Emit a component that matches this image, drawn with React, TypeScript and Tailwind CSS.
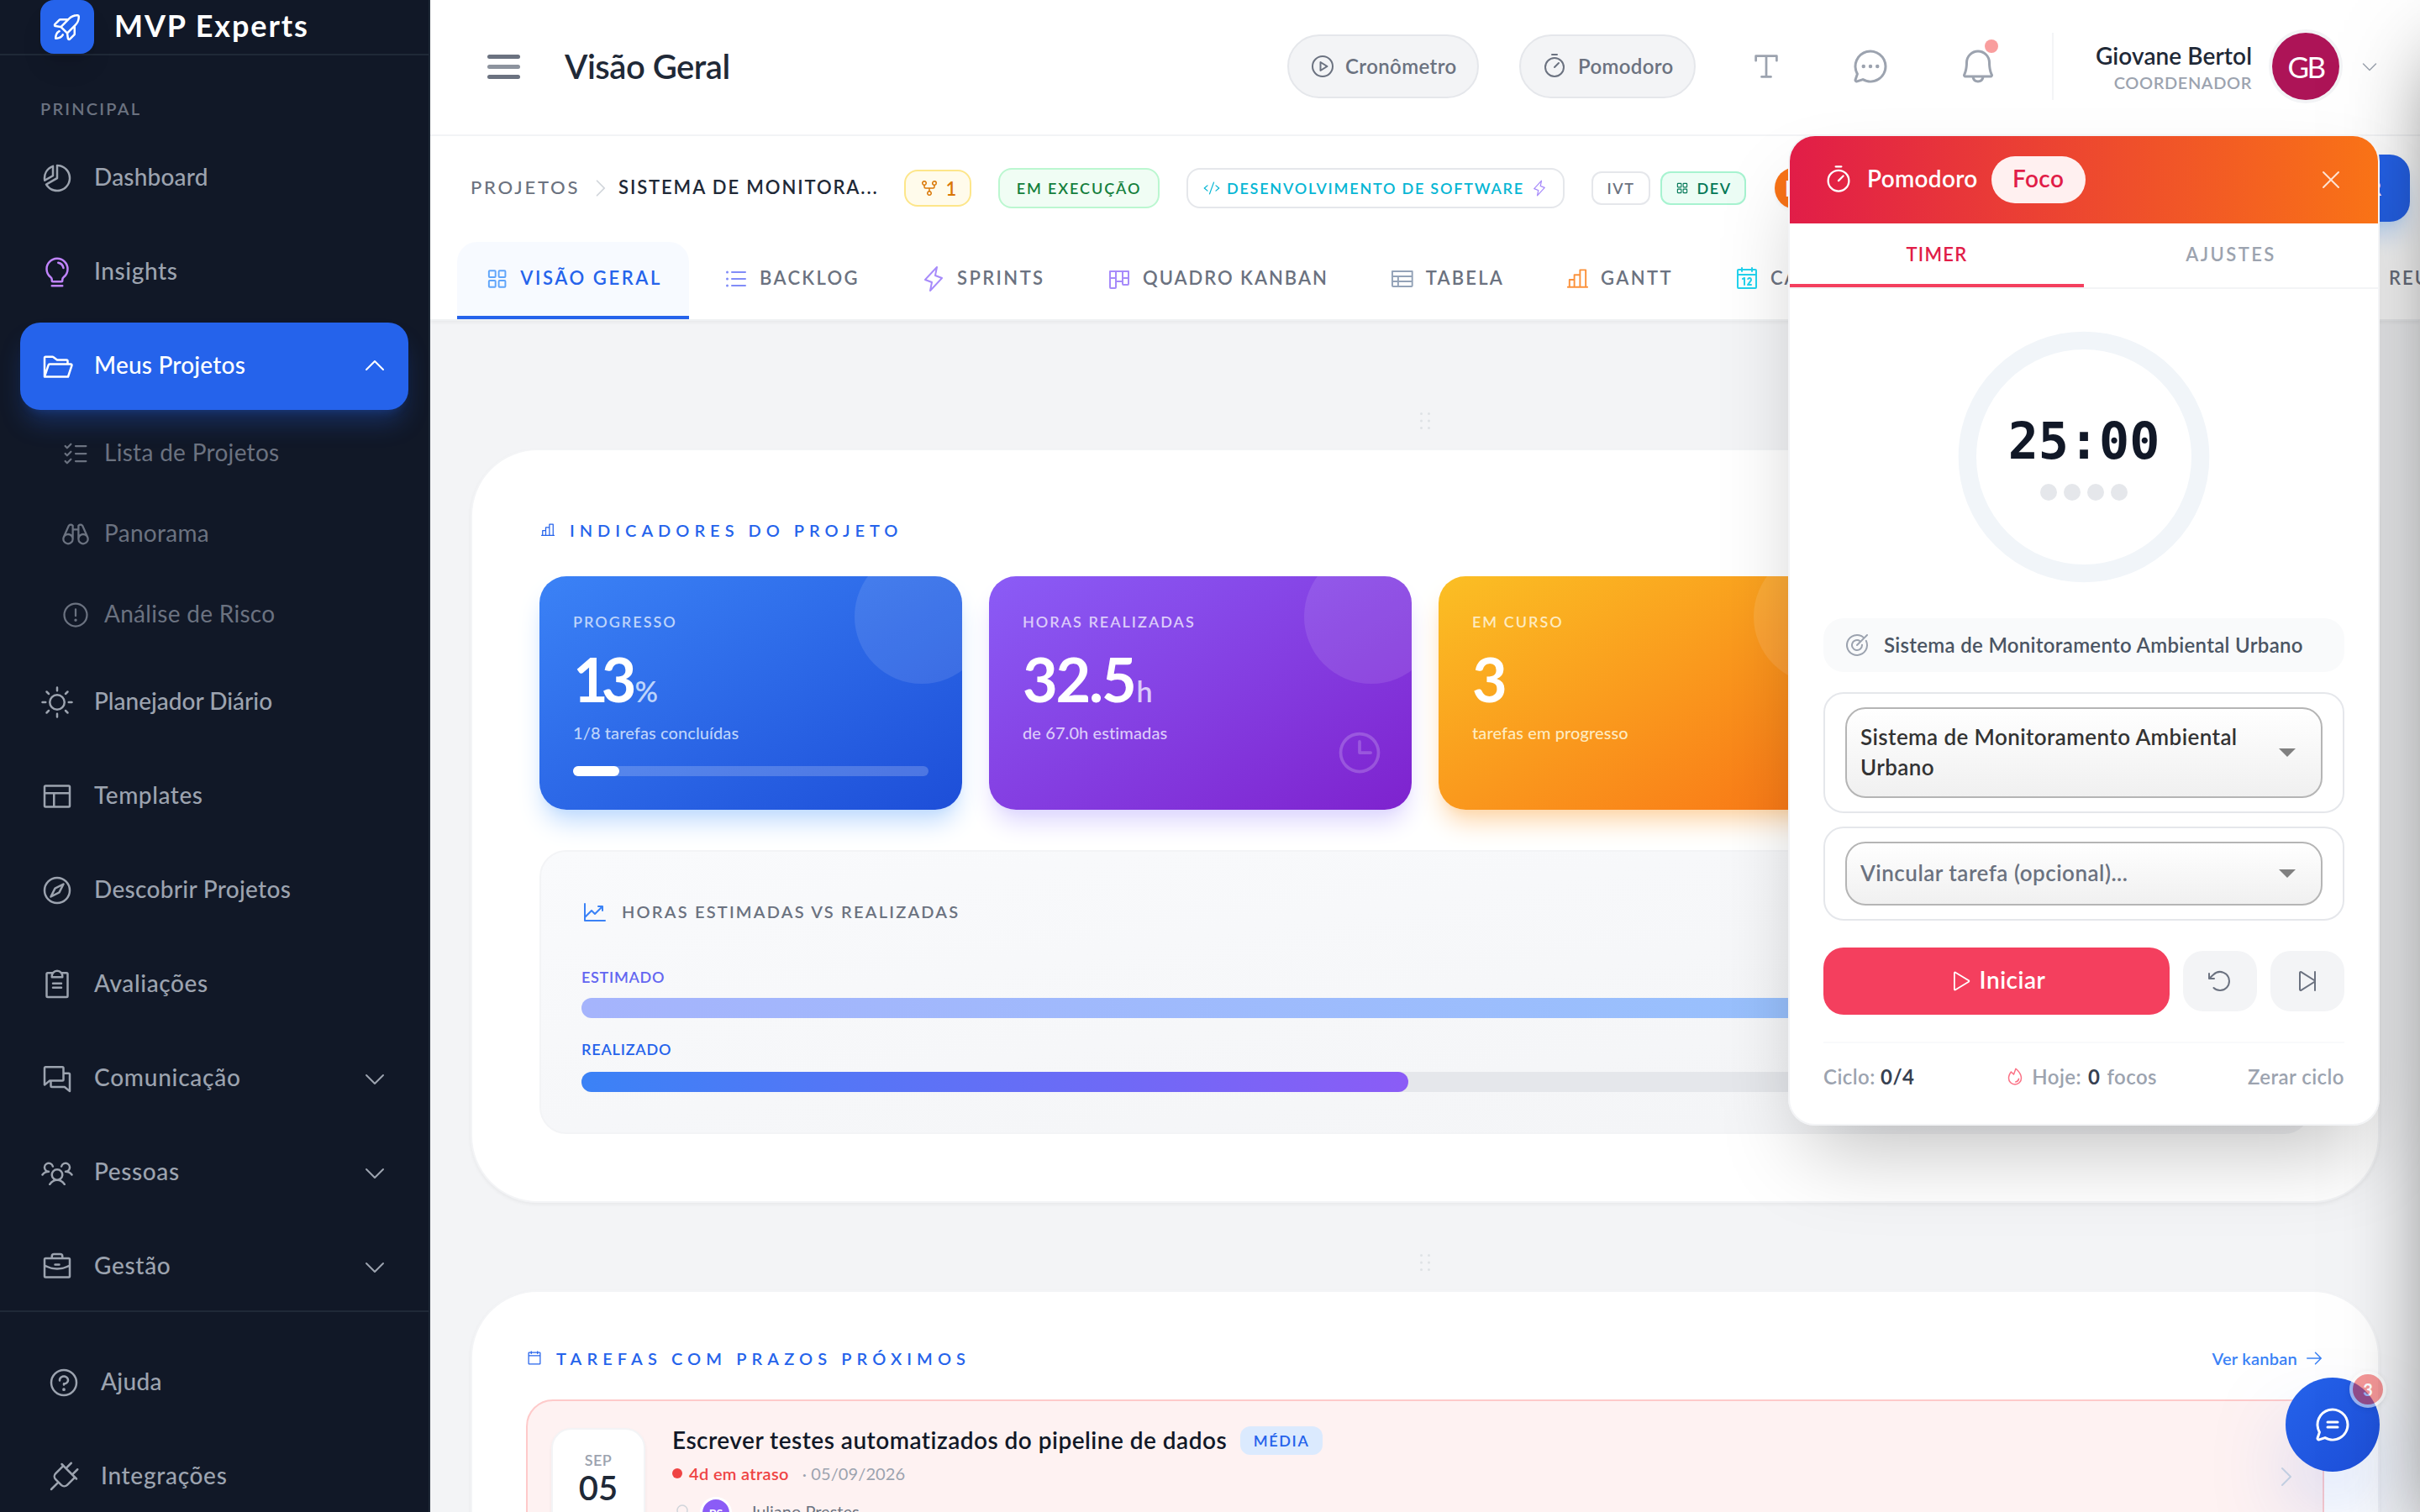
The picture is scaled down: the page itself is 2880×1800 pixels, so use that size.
import type { ReactNode } from 'react'
import {
  PiArrowCounterClockwise,
  PiArrowRight,
  PiBell,
  PiBinoculars,
  PiBriefcase,
  PiCalendar,
  PiCalendarBlank,
  PiCaretDown,
  PiCaretRight,
  PiCaretUp,
  PiChartBar,
  PiChartLineUp,
  PiChartPieSlice,
  PiChatCircleDots,
  PiChatCircleText,
  PiChats,
  PiClipboardText,
  PiClock,
  PiCode,
  PiCompass,
  PiDotsSixVertical,
  PiFire,
  PiFolderOpen,
  PiGitFork,
  PiKanban,
  PiLayout,
  PiLightbulb,
  PiLightning,
  PiListBullets,
  PiListChecks,
  PiPlay,
  PiPlayCircle,
  PiPlug,
  PiQuestion,
  PiRocketLaunch,
  PiSkipForward,
  PiSquaresFour,
  PiSun,
  PiTable,
  PiTarget,
  PiTextT,
  PiTimer,
  PiUser,
  PiUsersThree,
  PiWarningCircle,
  PiX,
} from 'react-icons/pi'

/* Palette of the product, set once as theme variables. */
const palette = [
  '[--color-gray-50:#f9fafb] [--color-gray-100:#f3f4f6] [--color-gray-200:#e5e7eb] [--color-gray-300:#d1d5db]',
  '[--color-gray-400:#9ca3af] [--color-gray-500:#6b7280] [--color-gray-600:#4b5563] [--color-gray-700:#374151]',
  '[--color-gray-800:#1f2937] [--color-gray-900:#111827] [--color-slate-300:#cbd5e1] [--color-slate-400:#94a3b8]',
  '[--color-blue-50:#eff6ff] [--color-blue-100:#dbeafe] [--color-blue-200:#bfdbfe] [--color-blue-300:#93c5fd]',
  '[--color-blue-400:#60a5fa] [--color-blue-500:#3b82f6] [--color-blue-600:#2563eb] [--color-blue-700:#1d4ed8]',
  '[--color-indigo-300:#a5b4fc] [--color-indigo-400:#818cf8] [--color-indigo-500:#6366f1]',
  '[--color-violet-400:#a78bfa] [--color-violet-500:#8b5cf6] [--color-purple-400:#c084fc] [--color-purple-700:#7e22ce]',
  '[--color-amber-50:#fffbeb] [--color-amber-200:#fde68a] [--color-amber-400:#fbbf24] [--color-amber-600:#d97706]',
  '[--color-orange-400:#fb923c] [--color-orange-500:#f97316] [--color-cyan-400:#22d3ee] [--color-cyan-500:#06b6d4]',
  '[--color-green-50:#f0fdf4] [--color-green-200:#bbf7d0] [--color-green-700:#15803d]',
  '[--color-emerald-50:#ecfdf5] [--color-emerald-200:#a7f3d0] [--color-emerald-700:#047857]',
  '[--color-red-50:#fef2f2] [--color-red-200:#fecaca] [--color-red-500:#ef4444]',
  '[--color-rose-400:#fb7185] [--color-rose-500:#f43f5e] [--color-rose-600:#e11d48]',
].join(' ')

function NavItem({ icon, label, caret, tracking = 'tracking-[0.15px]' }: {
  icon: ReactNode
  label: string
  caret?: boolean
  tracking?: string
}) {
  return (
    <div className="mb-1 flex h-[52px] items-center gap-3 rounded-xl px-3 text-gray-400">
      {icon}
      <span className={`-mt-0.5 flex-1 text-sm font-medium ${tracking}`}>{label}</span>
      {caret && <PiCaretDown className="size-4" />}
    </div>
  )
}

function SubItem({ icon, label }: { icon: ReactNode; label: string }) {
  return (
    <div className="mb-1 flex h-11 items-center gap-2 pl-6 text-gray-500">
      {icon}
      <span className="-mt-0.5 text-sm tracking-[0.15px]">{label}</span>
    </div>
  )
}

function Sidebar() {
  return (
    <aside className="relative h-full w-64 shrink-0 overflow-hidden border-r border-gray-800 bg-gray-900">
      <div className="flex h-[33px] items-start gap-3 border-b border-gray-800 pl-6">
        <div className="flex size-8 items-center justify-center rounded-lg bg-blue-600 text-white shadow-lg shadow-black/10">
          <PiRocketLaunch className="size-5" />
        </div>
        <span className="whitespace-nowrap pt-px text-lg font-bold tracking-[0.95px] text-white">MVP Experts</span>
      </div>
      <div className="flex h-[47px] items-end px-6 pb-2 text-[10px] font-semibold leading-[15px] tracking-[1.1px] text-gray-500">
        PRINCIPAL
      </div>
      <nav className="px-3">
        <NavItem icon={<PiChartPieSlice className="size-5" />} label="Dashboard" tracking="tracking-[0.1px]" />
        <NavItem icon={<PiLightbulb className="size-5 text-purple-400" />} label="Insights" tracking="tracking-[0.3px]" />
        <div className="mb-1 flex h-[52px] items-center gap-3 rounded-xl bg-blue-600 px-3 text-white shadow-lg shadow-blue-600/30">
          <PiFolderOpen className="size-5" />
          <span className="-mt-0.5 flex-1 text-sm font-medium tracking-[0.1px]">Meus Projetos</span>
          <PiCaretUp className="size-4" />
        </div>
        <SubItem icon={<PiListChecks className="size-[18px]" />} label="Lista de Projetos" />
        <SubItem icon={<PiBinoculars className="size-[18px]" />} label="Panorama" />
        <SubItem icon={<PiWarningCircle className="size-[18px]" />} label="Análise de Risco" />
        <NavItem icon={<PiSun className="size-5" />} label="Planejador Diário" tracking="tracking-normal" />
        <NavItem icon={<PiLayout className="size-5" />} label="Templates" tracking="tracking-[0.28px]" />
        <NavItem icon={<PiCompass className="size-5" />} label="Descobrir Projetos" />
        <NavItem icon={<PiClipboardText className="size-5" />} label="Avaliações" tracking="tracking-[0.3px]" />
        <NavItem icon={<PiChats className="size-5" />} label="Comunicação" caret tracking="tracking-[0.38px]" />
        <NavItem icon={<PiUsersThree className="size-5" />} label="Pessoas" caret tracking="tracking-[0.3px]" />
        <NavItem icon={<PiBriefcase className="size-5" />} label="Gestão" caret tracking="tracking-[0.35px]" />
      </nav>
      <div className="-mt-1 border-t border-gray-800 bg-gray-900 px-4 pt-4">
        <NavItem icon={<PiQuestion className="size-5" />} label="Ajuda" />
        <NavItem icon={<PiPlug className="size-5" />} label="Integrações" tracking="tracking-[0.35px]" />
      </div>
    </aside>
  )
}

function Header() {
  return (
    <header className="flex h-[81px] items-center border-b border-gray-100 bg-white px-6 pb-px">
      <div className="ml-[10px] flex w-[19.5px] flex-col gap-[3.5px]">
        <span className="h-[2.5px] rounded-full bg-gray-500" />
        <span className="h-[2.5px] rounded-full bg-[#8d939e]" />
        <span className="h-[2.5px] rounded-full bg-gray-500" />
      </div>
      <h1 className="ml-[26.5px] text-xl font-semibold tracking-[-0.25px] text-gray-800">Visão Geral</h1>
      <div className="ml-auto flex items-center">
        <div className="flex h-[38px] w-[114px] items-center rounded-full border border-gray-200 bg-gray-100 pl-3 text-gray-500">
          <PiPlayCircle className="size-4" />
          <span className="ml-[5.5px] text-xs font-semibold tracking-[0.2px]">Cronômetro</span>
        </div>
        <div className="ml-6 flex h-[38px] w-[105px] items-center rounded-full border border-gray-200 bg-gray-100 pl-3 text-gray-500">
          <PiTimer className="size-4" />
          <span className="ml-1.5 text-xs font-semibold tracking-[0.18px]">Pomodoro</span>
        </div>
        <div className="ml-6 flex h-10 w-9 items-center justify-center text-gray-400">
          <PiTextT className="size-[22px]" />
        </div>
        <div className="ml-6 flex size-10 items-center justify-center text-gray-400">
          <PiChatCircleDots className="size-6" />
        </div>
        <div className="relative ml-6 flex size-10 items-center justify-center text-gray-400">
          <PiBell className="size-6" />
          <span className="absolute right-2 top-1 size-2 rounded-full bg-[#f99e9e]" />
        </div>
        <div className="ml-6 flex h-10 items-center border-l border-gray-100 pl-6">
          <div className="w-[94px] pt-0.5 text-right">
            <div className="whitespace-nowrap text-sm font-semibold leading-[17px] tracking-[0.04px] text-gray-800">Giovane Bertol</div>
            <div className="text-[10px] font-semibold leading-[15px] tracking-[0.3px] text-gray-400">COORDENADOR</div>
          </div>
          <div className="ml-3 flex size-10 items-center justify-center rounded-full bg-[#ad1457] ring-2 ring-gray-100">
            <span className="text-[17.5px] tracking-[-1.3px] text-white">GB</span>
          </div>
          <PiCaretDown className="ml-3 size-3 text-gray-400" />
        </div>
      </div>
    </header>
  )
}

function Tab({ icon, label, className }: { icon: ReactNode; label: string; className: string }) {
  return (
    <div className={`mr-1 flex shrink-0 items-center gap-1.5 whitespace-nowrap border-b-2 px-4 text-[11px] font-semibold ${className}`}>
      {icon}
      <span className="-mt-[1.5px]">{label}</span>
    </div>
  )
}

function ProjectBar() {
  return (
    <div className="border-b border-gray-200/60 bg-white pt-[11px] shadow-xs">
      <div className="flex h-10 items-center whitespace-nowrap pl-6">
        <span className="-mt-0.5 w-[70px] text-[11px] font-medium tracking-[1.4px] text-gray-500">PROJETOS</span>
        <PiCaretRight className="mr-1 size-3.5 text-gray-300" />
        <span className="-mt-0.5 w-[154px] text-[11px] font-semibold tracking-[0.95px] text-gray-800">SISTEMA DE MONITORA...</span>
        <span className="ml-4 flex h-[22px] w-10 items-center justify-center gap-1 rounded-lg border border-amber-200 bg-amber-50 text-[11px] font-semibold text-amber-600">
          <PiGitFork className="size-3" />1
        </span>
        <span className="ml-4 flex h-6 w-24 items-center justify-center rounded-lg border border-green-200 bg-green-50 text-[9px] font-semibold tracking-[0.95px] text-green-700">
          EM EXECUÇÃO
        </span>
        <span className="ml-4 flex h-6 w-[225px] items-center rounded-lg border border-gray-200 bg-white pl-[9px] text-[9px] font-semibold tracking-[0.89px] text-cyan-500">
          <PiCode className="mr-1 size-[10px]" />
          DESENVOLVIMENTO DE SOFTWARE
          <PiLightning className="ml-1 size-[10px] text-violet-400" />
        </span>
        <span className="ml-4 flex h-5 w-[35px] items-center justify-center rounded-md border border-gray-200 bg-white text-[9px] font-semibold tracking-[0.8px] text-gray-500">
          IVT
        </span>
        <span className="ml-1.5 flex h-5 w-[51px] items-center justify-center gap-1 rounded-md border border-emerald-200 bg-emerald-50 text-[9px] font-semibold tracking-[0.8px] text-emerald-700">
          <PiSquaresFour className="size-[9px]" />
          DEV
        </span>
        <span className="ml-[17px] flex h-[25px] w-[120px] items-center rounded-full bg-orange-500 pl-[6px] text-[13px] font-bold text-white shadow-xs">
          E
        </span>
        <span className="ml-auto mr-[6px] flex h-10 w-[140px] items-center justify-end rounded-xl bg-blue-600 pr-[17px] text-[11px] font-bold text-white shadow-lg shadow-blue-200">
          R
        </span>
      </div>
      <div className="mt-3 flex h-[46px] overflow-hidden pl-4">
        <Tab
          icon={<PiSquaresFour className="size-4 text-blue-400" />}
          label="VISÃO GERAL"
          className="w-[138px] rounded-t-xl border-blue-600 bg-blue-50/50 tracking-[1.3px] text-blue-600"
        />
        <Tab
          icon={<PiListBullets className="size-4 text-indigo-400" />}
          label="BACKLOG"
          className="w-[113.5px] border-transparent tracking-[1.15px] text-gray-500"
        />
        <Tab
          icon={<PiLightning className="size-4 text-violet-400" />}
          label="SPRINTS"
          className="w-[106.5px] border-transparent tracking-[1.2px] text-gray-500"
        />
        <Tab
          icon={<PiKanban className="size-4 text-violet-400" />}
          label="QUADRO KANBAN"
          className="w-[164.5px] border-transparent tracking-[0.98px] text-gray-500"
        />
        <Tab
          icon={<PiTable className="size-4 text-slate-400" />}
          label="TABELA"
          className="w-[100.5px] border-transparent tracking-[1.1px] text-gray-500"
        />
        <Tab
          icon={<PiChartBar className="size-4 text-orange-400" />}
          label="GANTT"
          className="w-[96.5px] border-transparent tracking-[1.2px] text-gray-500"
        />
        <Tab
          icon={<PiCalendar className="size-4 text-cyan-400" />}
          label="CALENDÁRIO"
          className="w-[364px] border-transparent tracking-[1px] text-gray-500"
        />
        <Tab icon={<PiUser className="size-4" />} label="REUNIÕES" className="border-transparent tracking-[1px] text-gray-500" />
      </div>
    </div>
  )
}

function Kpi({ label, value, valueClass = 'tracking-[-1.1px]', unit, note, className, noteClass, unitClass, children }: {
  label: string
  value: string
  valueClass?: string
  unit?: string
  note: string
  className: string
  noteClass: string
  unitClass?: string
  children?: ReactNode
}) {
  return (
    <div className={`relative h-[139px] overflow-hidden rounded-2xl bg-linear-to-br/srgb p-5 ${className}`}>
      <div className="absolute -right-4 -top-4 size-20 rounded-full bg-white/10" />
      <div className={`text-[9px] font-semibold leading-[14px] tracking-[1px] ${noteClass}`}>{label}</div>
      <div className="mt-[9px] flex h-9 items-baseline leading-9">
        <span className={`text-4xl font-bold leading-9 text-white ${valueClass}`}>{value}</span>
        {unit && <span className={`text-[17px] font-semibold leading-9 ${noteClass} ${unitClass}`}>{unit}</span>}
      </div>
      <div className={`mt-[6px] text-[10px] font-medium leading-4 tracking-[0.05px] ${noteClass}`}>{note}</div>
      {children}
    </div>
  )
}

function Indicators() {
  return (
    <section className="h-[449px] rounded-[40px] border border-gray-100 bg-white p-10 shadow-xs">
      <div className="flex h-[15px] items-center gap-2 text-[10px] font-semibold tracking-[3px] text-blue-600">
        <PiChartBar className="size-[10px]" />
        INDICADORES DO PROJETO
      </div>
      <div className="mt-5 grid grid-cols-4 gap-4">
        <Kpi
          label="PROGRESSO"
          value="13"
          valueClass="tracking-[-4px]"
          unit="%"
          note="1/8 tarefas concluídas"
          className="from-blue-500 to-blue-700 shadow-[0_10px_15px_-3px_#bfdbfe,0_4px_6px_-4px_#bfdbfe]"
          noteClass="text-[#bdd4fb]"
          unitClass="ml-[3px] tracking-[-1px]"
        >
          <div className="mt-[12px] h-1.5 rounded-full bg-white/20">
            <div className="h-full w-[13%] rounded-full bg-white" />
          </div>
        </Kpi>
        <Kpi
          label="HORAS REALIZADAS"
          value="32.5"
          unit="h"
          note="de 67.0h estimadas"
          className="from-violet-500 to-purple-700 shadow-[0_10px_15px_-3px_#ddd6fe,0_4px_6px_-4px_#ddd6fe]"
          noteClass="text-[#dccbfa]"
          unitClass="ml-px"
        >
          <PiClock className="absolute bottom-[19px] right-4 size-[30px] text-white/20" />
        </Kpi>
        <Kpi
          label="EM CURSO"
          value="3"
          note="tarefas em progresso"
          className="from-amber-400 to-orange-500 shadow-[0_10px_15px_-3px_#fed7aa,0_4px_6px_-4px_#fed7aa]"
          noteClass="text-[#feebc0]"
        />
      </div>
      <div className="mt-6 h-[169px] rounded-2xl border border-gray-100 bg-linear-to-br/srgb from-[#f9fafc] to-[#f3f4f6] px-6 pt-7">
        <div className="flex h-4 items-center gap-2 text-[10px] font-semibold tracking-[1.1px] text-gray-500">
          <PiChartLineUp className="size-4 text-blue-500" />
          <span className="-mt-[1.5px]">HORAS ESTIMADAS VS REALIZADAS</span>
        </div>
        <div className="mt-[24.5px] text-[9px] font-semibold leading-[12px] tracking-[0.35px] text-indigo-500">ESTIMADO</div>
        <div className="mt-[6.5px] h-3 rounded-full bg-linear-to-r/srgb from-indigo-300 to-blue-300" />
        <div className="mt-[12.5px] text-[9px] font-semibold leading-[12px] tracking-[0.4px] text-blue-600">REALIZADO</div>
        <div className="mt-[7.5px] h-3 rounded-full bg-gray-200">
          <div className="h-full w-[49%] rounded-full bg-linear-to-r/srgb from-blue-500 to-violet-500" />
        </div>
      </div>
    </section>
  )
}

function Deadlines() {
  return (
    <section className="h-[300px] rounded-[40px] border border-gray-100 bg-white p-8 shadow-xs">
      <div className="flex h-[15px] items-center text-[10px] font-semibold tracking-[3.05px] text-blue-600">
        <PiCalendarBlank className="mr-2 size-[10px]" />
        TAREFAS COM PRAZOS PRÓXIMOS
        <span className="ml-auto flex items-center gap-1 font-semibold tracking-[0.12px] text-blue-500">
          Ver kanban
          <PiArrowRight className="size-3" />
        </span>
      </div>
      <div className="mt-[17px] flex h-24 rounded-2xl border border-red-200 bg-red-50 pl-[14px] pr-[14px]">
        <div className="mt-4 h-[66px] w-14 rounded-xl border border-gray-100 bg-white pt-[11px] text-center shadow-xs">
          <div className="text-[9px] font-semibold leading-[14px] tracking-[0.2px] text-gray-400">SEP</div>
          <div className="text-xl font-semibold leading-[19px] text-gray-800">05</div>
        </div>
        <div className="ml-4 flex-1 pt-[15px]">
          <div className="flex h-[17px] items-center gap-2">
            <span className="-mt-px text-sm font-semibold tracking-[0.24px] text-gray-900">
              Escrever testes automatizados do pipeline de dados
            </span>
            <span className="flex h-[17px] w-[49px] items-center justify-center rounded-md bg-blue-100 text-[9px] font-semibold tracking-[0.8px] text-blue-600">
              MÉDIA
            </span>
          </div>
          <div className="mt-[3.5px] flex h-[15px] items-center text-[10px]">
            <span className="mr-1 size-1.5 rounded-full bg-red-500" />
            <span className="font-semibold tracking-[0.17px] text-red-500">4d em atraso</span>
            <span className="ml-2 tracking-[0.05px] text-gray-400">· 05/09/2026</span>
          </div>
          <div className="mt-2 flex h-4 items-center">
            <PiUser className="size-3 text-gray-300" />
            <span className="ml-1.5 flex size-4 items-center justify-center rounded-full bg-violet-500 text-[7px] font-bold text-white ring-[1.5px] ring-white">
              PS
            </span>
            <span className="-mt-0.5 ml-3 text-[10px] text-gray-500">Juliano Prestes</span>
          </div>
        </div>
        <PiCaretRight className="mt-[37px] size-4 text-slate-300" />
      </div>
    </section>
  )
}

function Triangle() {
  return (
    <svg viewBox="0 0 10 5" className="mr-[15px] h-[5px] w-[10px] shrink-0">
      <path d="M0 0h10L5 5z" fill="#808080" />
    </svg>
  )
}

function Pomodoro() {
  return (
    <div className="absolute left-[1064px] top-20 h-[590px] w-[352px] overflow-hidden rounded-2xl border border-gray-100 bg-white">
      <div className="flex h-[52px] items-center bg-linear-to-r/srgb from-rose-600 to-orange-500 px-5 text-sm font-semibold text-white">
        <PiTimer className="size-[18px]" />
        <span className="-mt-0.5 ml-2 tracking-[0.15px]">Pomodoro</span>
        <span className="ml-2 flex h-7 w-14 items-center justify-center rounded-full bg-[#fff0f0] pb-0.5 tracking-[0.2px] text-rose-600">
          Foco
        </span>
        <PiX className="ml-auto size-4 text-white/80" />
      </div>
      <div className="flex h-[39px] border-b border-gray-100 text-[11px] font-semibold">
        <div className="flex w-1/2 items-center justify-center border-b-2 border-rose-500 tracking-[0.65px] text-rose-600">TIMER</div>
        <div className="flex w-1/2 items-center justify-center pb-0.5 tracking-[1.2px] text-gray-400">AJUSTES</div>
      </div>
      <div className="px-5 pt-5">
        <div className="relative mx-auto size-40">
          <svg viewBox="0 0 120 120" className="size-40">
            <circle cx="60" cy="60" r="52" fill="none" stroke="#f1f5f9" strokeWidth="8" />
          </svg>
          <div className="absolute inset-0 flex flex-col items-center pt-[52.5px]">
            <div className="font-['DejaVu_Sans_Mono',monospace] text-3xl font-bold leading-9 text-gray-900">25:00</div>
            <div className="mt-[7.5px] flex gap-1">
              <span className="size-2.5 rounded-full bg-gray-200" />
              <span className="size-2.5 rounded-full bg-gray-200" />
              <span className="size-2.5 rounded-full bg-gray-200" />
              <span className="size-2.5 rounded-full bg-gray-200" />
            </div>
          </div>
        </div>
        <div className="mt-4 flex h-8 items-center gap-2 rounded-xl bg-gray-50 px-3 text-xs font-semibold tracking-[0.15px] text-gray-600">
          <PiTarget className="size-4 text-gray-400" />
          <span className="whitespace-nowrap">Sistema de Monitoramento Ambiental Urbano</span>
        </div>
        <div className="mt-3 h-[72px] rounded-xl border border-gray-200 px-3 pt-2">
          <div className="flex h-[54px] items-center justify-between rounded-xl border border-[#b5b5b5] bg-linear-to-b/srgb from-white to-[#f0f0f0] pl-2">
            <span className="-mt-px w-[235px] text-[13px] font-semibold leading-[18px] tracking-[0.2px] text-[#333]">
              Sistema de Monitoramento Ambiental Urbano
            </span>
            <Triangle />
          </div>
        </div>
        <div className="mt-2 h-14 rounded-xl border border-gray-200 px-3 pt-2">
          <div className="flex h-[38px] items-center justify-between rounded-xl border border-[#b5b5b5] bg-linear-to-b/srgb from-white to-[#f0f0f0] pl-2">
            <span className="-mt-px text-[13px] font-semibold tracking-[0.25px] text-gray-500">Vincular tarefa (opcional)...</span>
            <Triangle />
          </div>
        </div>
        <div className="mt-4 flex h-10 items-center gap-2">
          <div className="flex h-10 w-[206px] items-center justify-center gap-[5px] rounded-xl bg-rose-500 text-sm font-semibold text-white">
            <PiPlay className="size-3.5" />
            <span className="-mt-0.5 tracking-[0.25px]">Iniciar</span>
          </div>
          <div className="flex h-9 w-11 items-center justify-center rounded-xl bg-gray-100 text-gray-500">
            <PiArrowCounterClockwise className="size-4" />
          </div>
          <div className="flex h-9 w-11 items-center justify-center rounded-xl bg-gray-100 text-gray-500">
            <PiSkipForward className="size-4" />
          </div>
        </div>
        <div className="mt-4 flex items-center justify-between border-t border-gray-50 pt-3 text-xs font-semibold leading-4 tracking-[0.22px] text-gray-400">
          <span>
            Ciclo: <b className="font-bold text-gray-700">0/4</b>
          </span>
          <span className="flex items-center">
            <PiFire className="mr-1 size-3 text-rose-400" />
            Hoje: <b className="mx-1 font-bold text-gray-700">0</b> focos
          </span>
          <span>Zerar ciclo</span>
        </div>
      </div>
    </div>
  )
}

export default function App() {
  return (
    <div
      className={`relative flex h-[900px] w-[1440px] overflow-hidden bg-gray-100 font-['Lato','Noto_Sans',sans-serif] [zoom:2] ${palette}`}
    >
      <Sidebar />
      <div className="flex min-w-0 flex-1 flex-col">
        <Header />
        <ProjectBar />
        <main className="flex-1 overflow-hidden px-6">
          <div className="flex h-[76px] items-end justify-center pb-[8.5px]">
            <PiDotsSixVertical className="size-4 text-gray-300/60" />
          </div>
          <Indicators />
          <div className="flex h-[52px] items-end justify-center pb-[8.5px]">
            <PiDotsSixVertical className="size-4 text-gray-300/60" />
          </div>
          <Deadlines />
        </main>
      </div>

      <div className="absolute left-[1360px] top-[820px] flex size-14 items-center justify-center rounded-full bg-linear-to-br/srgb from-blue-600 to-blue-700 text-white shadow-[0_25px_50px_-12px_rgba(37,99,235,0.5)]">
        <PiChatCircleText className="size-6" />
        <span className="absolute -right-1 -top-1 flex size-[22px] items-center justify-center rounded-full border-2 border-white bg-red-500 text-[10px] font-bold text-white opacity-55 shadow-sm">
          3
        </span>
      </div>

      <div className="absolute left-[1440px] top-0 h-[900px] w-80 shadow-[0_25px_50px_-12px_rgba(0,0,0,0.6)]" />
      <div className="absolute left-[1064px] top-20 h-[590px] w-[352px] rounded-2xl shadow-2xl" />
      <Pomodoro />
    </div>
  )
}
